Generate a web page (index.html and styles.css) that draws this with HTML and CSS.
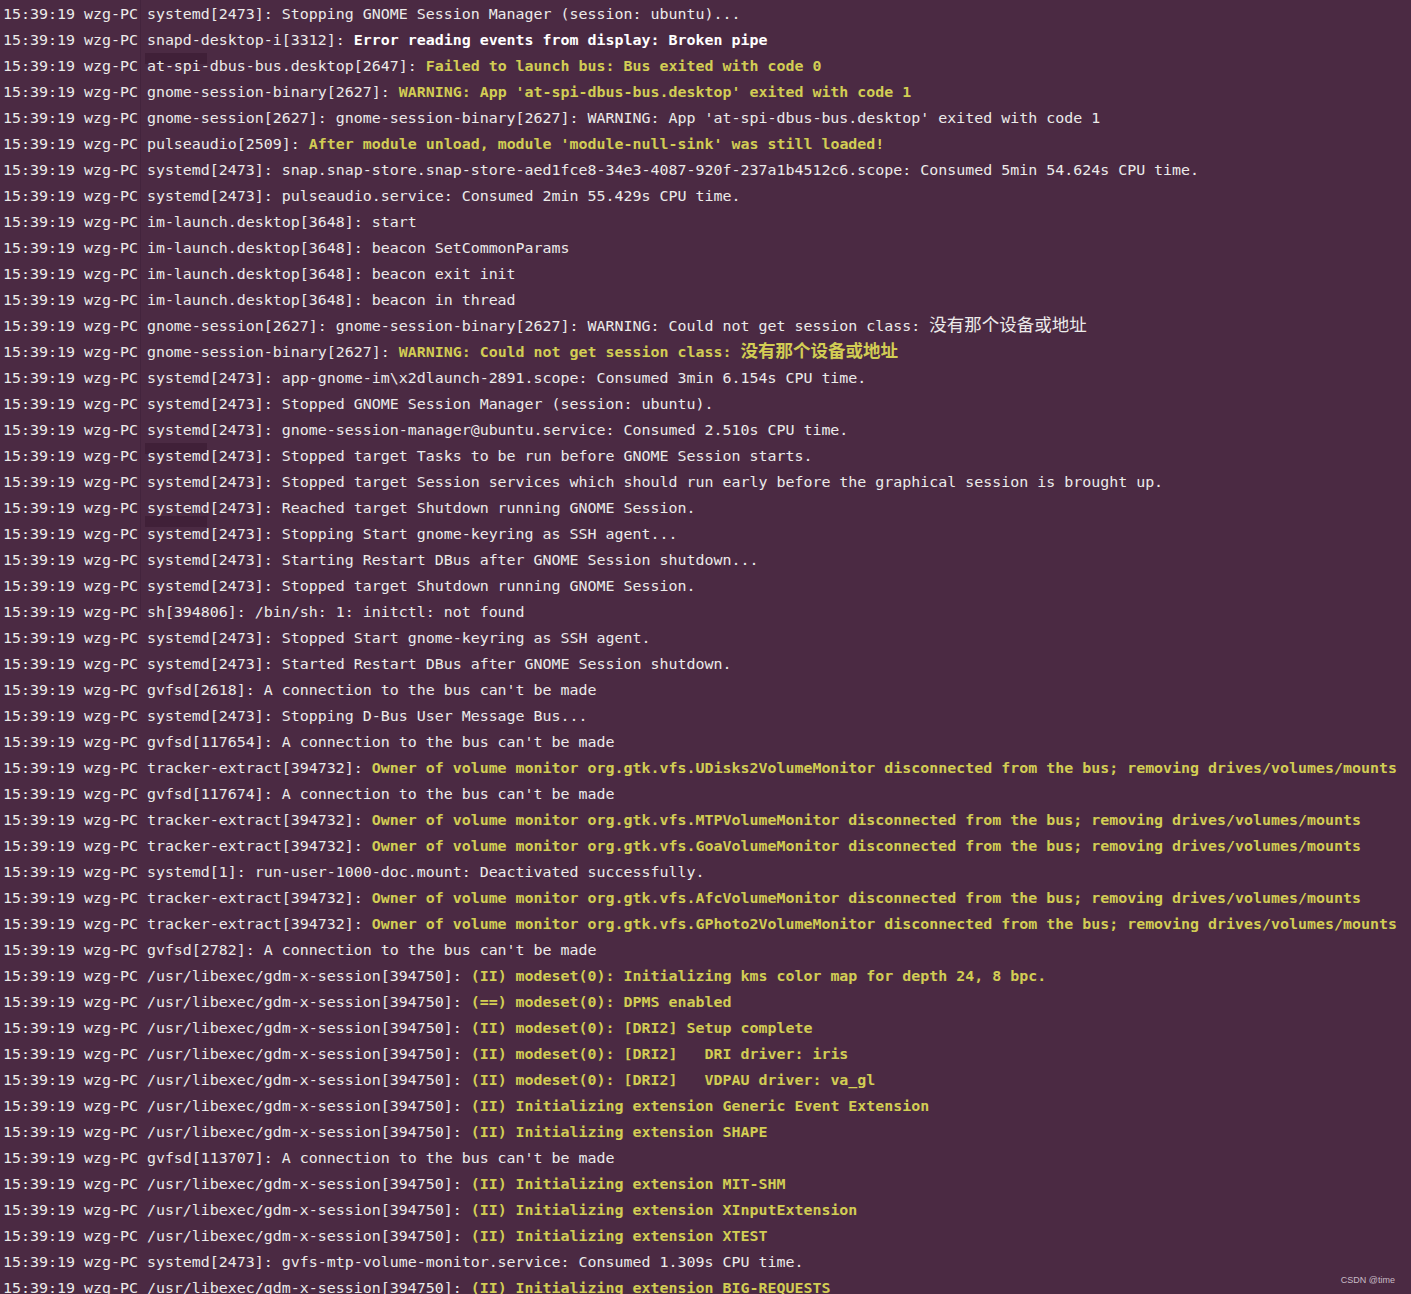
FILE: index.html
```html
<html>
  <head>
    <title>journal</title>
    <link rel="stylesheet" href="styles.css">
  </head>
  <body>
    <div class="terminal">
      <div class="ghost">
        <span class="g-line"></span>
        <span class="g-bar" style="top:53px"></span>
        <span class="g-bar" style="top:443px"></span>
        <span class="g-bar" style="top:516px"></span>
      </div>

      <div class="log">
        <div class="line">15:39:19 wzg-PC systemd[2473]: Stopping GNOME Session Manager (session: ubuntu)...</div>
        <div class="line">15:39:19 wzg-PC snapd-desktop-i[3312]: <span class="err">Error reading events from display: Broken pipe</span></div>
        <div class="line">15:39:19 wzg-PC at-spi-dbus-bus.desktop[2647]: <span class="hl">Failed to launch bus: Bus exited with code 0</span></div>
        <div class="line">15:39:19 wzg-PC gnome-session-binary[2627]: <span class="hl">WARNING: App 'at-spi-dbus-bus.desktop' exited with code 1</span></div>
        <div class="line">15:39:19 wzg-PC gnome-session[2627]: gnome-session-binary[2627]: WARNING: App 'at-spi-dbus-bus.desktop' exited with code 1</div>
        <div class="line">15:39:19 wzg-PC pulseaudio[2509]: <span class="hl">After module unload, module 'module-null-sink' was still loaded!</span></div>
        <div class="line">15:39:19 wzg-PC systemd[2473]: snap.snap-store.snap-store-aed1fce8-34e3-4087-920f-237a1b4512c6.scope: Consumed 5min 54.624s CPU time.</div>
        <div class="line">15:39:19 wzg-PC systemd[2473]: pulseaudio.service: Consumed 2min 55.429s CPU time.</div>
        <div class="line">15:39:19 wzg-PC im-launch.desktop[3648]: start</div>
        <div class="line">15:39:19 wzg-PC im-launch.desktop[3648]: beacon SetCommonParams</div>
        <div class="line">15:39:19 wzg-PC im-launch.desktop[3648]: beacon exit init</div>
        <div class="line">15:39:19 wzg-PC im-launch.desktop[3648]: beacon in thread</div>
        <div class="line">15:39:19 wzg-PC gnome-session[2627]: gnome-session-binary[2627]: WARNING: Could not get session class: <span class="cjk">没有那个设备或地址</span></div>
        <div class="line">15:39:19 wzg-PC gnome-session-binary[2627]: <span class="hl">WARNING: Could not get session class: <span class="cjk">没有那个设备或地址</span></span></div>
        <div class="line">15:39:19 wzg-PC systemd[2473]: app-gnome-im\x2dlaunch-2891.scope: Consumed 3min 6.154s CPU time.</div>
        <div class="line">15:39:19 wzg-PC systemd[2473]: Stopped GNOME Session Manager (session: ubuntu).</div>
        <div class="line">15:39:19 wzg-PC systemd[2473]: gnome-session-manager@ubuntu.service: Consumed 2.510s CPU time.</div>
        <div class="line">15:39:19 wzg-PC systemd[2473]: Stopped target Tasks to be run before GNOME Session starts.</div>
        <div class="line">15:39:19 wzg-PC systemd[2473]: Stopped target Session services which should run early before the graphical session is brought up.</div>
        <div class="line">15:39:19 wzg-PC systemd[2473]: Reached target Shutdown running GNOME Session.</div>
        <div class="line">15:39:19 wzg-PC systemd[2473]: Stopping Start gnome-keyring as SSH agent...</div>
        <div class="line">15:39:19 wzg-PC systemd[2473]: Starting Restart DBus after GNOME Session shutdown...</div>
        <div class="line">15:39:19 wzg-PC systemd[2473]: Stopped target Shutdown running GNOME Session.</div>
        <div class="line">15:39:19 wzg-PC sh[394806]: /bin/sh: 1: initctl: not found</div>
        <div class="line">15:39:19 wzg-PC systemd[2473]: Stopped Start gnome-keyring as SSH agent.</div>
        <div class="line">15:39:19 wzg-PC systemd[2473]: Started Restart DBus after GNOME Session shutdown.</div>
        <div class="line">15:39:19 wzg-PC gvfsd[2618]: A connection to the bus can't be made</div>
        <div class="line">15:39:19 wzg-PC systemd[2473]: Stopping D-Bus User Message Bus...</div>
        <div class="line">15:39:19 wzg-PC gvfsd[117654]: A connection to the bus can't be made</div>
        <div class="line">15:39:19 wzg-PC tracker-extract[394732]: <span class="hl">Owner of volume monitor org.gtk.vfs.UDisks2VolumeMonitor disconnected from the bus; removing drives/volumes/mounts</span></div>
        <div class="line">15:39:19 wzg-PC gvfsd[117674]: A connection to the bus can't be made</div>
        <div class="line">15:39:19 wzg-PC tracker-extract[394732]: <span class="hl">Owner of volume monitor org.gtk.vfs.MTPVolumeMonitor disconnected from the bus; removing drives/volumes/mounts</span></div>
        <div class="line">15:39:19 wzg-PC tracker-extract[394732]: <span class="hl">Owner of volume monitor org.gtk.vfs.GoaVolumeMonitor disconnected from the bus; removing drives/volumes/mounts</span></div>
        <div class="line">15:39:19 wzg-PC systemd[1]: run-user-1000-doc.mount: Deactivated successfully.</div>
        <div class="line">15:39:19 wzg-PC tracker-extract[394732]: <span class="hl">Owner of volume monitor org.gtk.vfs.AfcVolumeMonitor disconnected from the bus; removing drives/volumes/mounts</span></div>
        <div class="line">15:39:19 wzg-PC tracker-extract[394732]: <span class="hl">Owner of volume monitor org.gtk.vfs.GPhoto2VolumeMonitor disconnected from the bus; removing drives/volumes/mounts</span></div>
        <div class="line">15:39:19 wzg-PC gvfsd[2782]: A connection to the bus can't be made</div>
        <div class="line">15:39:19 wzg-PC /usr/libexec/gdm-x-session[394750]: <span class="hl">(II) modeset(0): Initializing kms color map for depth 24, 8 bpc.</span></div>
        <div class="line">15:39:19 wzg-PC /usr/libexec/gdm-x-session[394750]: <span class="hl">(==) modeset(0): DPMS enabled</span></div>
        <div class="line">15:39:19 wzg-PC /usr/libexec/gdm-x-session[394750]: <span class="hl">(II) modeset(0): [DRI2] Setup complete</span></div>
        <div class="line">15:39:19 wzg-PC /usr/libexec/gdm-x-session[394750]: <span class="hl">(II) modeset(0): [DRI2]   DRI driver: iris</span></div>
        <div class="line">15:39:19 wzg-PC /usr/libexec/gdm-x-session[394750]: <span class="hl">(II) modeset(0): [DRI2]   VDPAU driver: va_gl</span></div>
        <div class="line">15:39:19 wzg-PC /usr/libexec/gdm-x-session[394750]: <span class="hl">(II) Initializing extension Generic Event Extension</span></div>
        <div class="line">15:39:19 wzg-PC /usr/libexec/gdm-x-session[394750]: <span class="hl">(II) Initializing extension SHAPE</span></div>
        <div class="line">15:39:19 wzg-PC gvfsd[113707]: A connection to the bus can't be made</div>
        <div class="line">15:39:19 wzg-PC /usr/libexec/gdm-x-session[394750]: <span class="hl">(II) Initializing extension MIT-SHM</span></div>
        <div class="line">15:39:19 wzg-PC /usr/libexec/gdm-x-session[394750]: <span class="hl">(II) Initializing extension XInputExtension</span></div>
        <div class="line">15:39:19 wzg-PC /usr/libexec/gdm-x-session[394750]: <span class="hl">(II) Initializing extension XTEST</span></div>
        <div class="line">15:39:19 wzg-PC systemd[2473]: gvfs-mtp-volume-monitor.service: Consumed 1.309s CPU time.</div>
        <div class="line">15:39:19 wzg-PC /usr/libexec/gdm-x-session[394750]: <span class="hl">(II) Initializing extension BIG-REQUESTS</span></div>
      </div>

      <div class="watermark">CSDN @time</div>
    </div>
  </body>
</html>
```

FILE: styles.css
```css
html, body {
    margin: 0;
    padding: 0;
    background-color: #4b2a43;
}

.terminal {
    position: relative;
    width: 1411px;
    height: 1294px;
    overflow: hidden;
    background-color: #4b2a43;
}

.log {
    position: relative;
    padding-top: 1px;
    padding-left: 3px;
    font-family: "DejaVu Sans Mono", "Liberation Mono", monospace;
    font-size: 14.95px;
    line-height: 26px;
    color: #ecebea;
}

.line {
    height: 26px;
    white-space: pre;
}

.hl {
    color: #d2cd54;
    font-weight: bold;
}

.err {
    color: #ffffff;
    font-weight: bold;
}

.cjk {
    font-family: "Noto Sans CJK SC", sans-serif;
    font-size: 17.5px;
    line-height: 16px;
}

/* faint window showing through the translucent terminal */
.ghost span {
    position: absolute;
}

.g-line {
    top: 0;
    left: 140px;
    width: 1px;
    height: 620px;
    background-color: rgba(30, 5, 25, 0.15);
}

.g-bar {
    left: 145px;
    width: 62px;
    height: 11px;
    background-color: rgba(30, 5, 25, 0.25);
}

.watermark {
    position: absolute;
    right: 16px;
    bottom: 9px;
    font-family: "Liberation Sans", Arial, sans-serif;
    font-size: 9px;
    color: #c9bcc6;
}
```
